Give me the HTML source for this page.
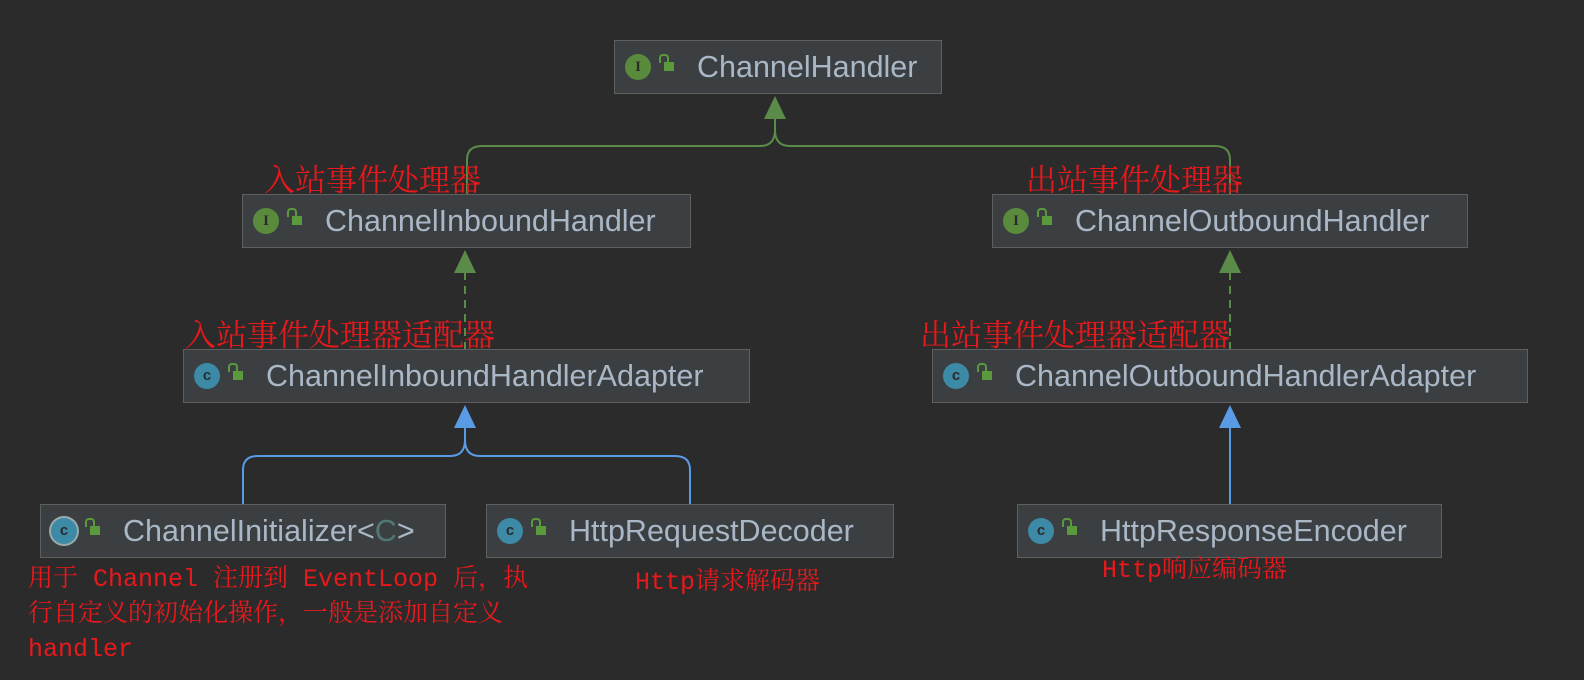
<!DOCTYPE html>
<html><head><meta charset="utf-8"><style>
body{margin:0;width:1584px;height:680px;background:#2b2b2b;position:relative;overflow:hidden;font-family:"Liberation Sans","DejaVu Sans",sans-serif}
.b{position:absolute;height:54px;background:#3c3f41;border:1px solid #5e6060;box-sizing:border-box;color:#a9b7c6;font-size:30.5px;line-height:52px;white-space:nowrap}
.ic{position:absolute;top:13px;width:26px;height:26px;border-radius:50%;color:#2b2b2b;font:bold 15px/26px "Liberation Serif",serif;text-align:center}
.i{background:#5a8b3c}.c{background:#3c8aa6;font-family:"Liberation Sans",sans-serif}
.lk{position:absolute;top:21px;width:10px;height:9px;background:#5b9a3c}
.lk:before{content:"";position:absolute;left:-5px;top:-8px;width:6px;height:7px;border:2px solid #5b9a3c;border-bottom:none;border-radius:4px 4px 0 0}
.t{position:absolute}
.r{position:absolute;color:#e8191c;font-family:"Liberation Serif","Noto Serif CJK SC",serif;font-size:31px;white-space:nowrap}
.s{position:absolute;color:#e8191c;font-family:"Liberation Mono","Noto Serif CJK SC",monospace;font-size:25px;line-height:35px;white-space:nowrap}
</style></head><body>
<svg width="1584" height="680" style="position:absolute;left:0;top:0">
<g fill="none" stroke="#5a8b48" stroke-width="2">
<path d="M775 116 V130 Q775 146 760 146 H482 Q467 146 467 160 V194"/>
<path d="M775 130 Q775 146 790 146 H1215 Q1230 146 1230 160 V194"/>
<path d="M465 272 V349 M1230 272 V349" stroke-dasharray="8 6"/>
</g>
<g fill="#5a8b48"><path d="M775 96 L764 119 H786Z"/><path d="M465 250 L454 273 H476Z"/><path d="M1230 250 L1219 273 H1241Z"/></g>
<g fill="none" stroke="#5a9be6" stroke-width="2">
<path d="M465 426 V440 Q465 456 450 456 H258 Q243 456 243 470 V504"/>
<path d="M465 440 Q465 456 480 456 H675 Q690 456 690 470 V504"/>
<path d="M1230 426 V504"/>
</g>
<g fill="#5a9be6"><path d="M465 405 L454 428 H476Z"/><path d="M1230 405 L1219 428 H1241Z"/></g>
</svg>

<div class="b" style="left:614px;top:40px;width:328px"><div class="ic i" style="left:10px">I</div><div class="lk" style="left:49px"></div><span class="t" style="left:82px">ChannelHandler</span></div>
<div class="b" style="left:242px;top:194px;width:449px"><div class="ic i" style="left:10px">I</div><div class="lk" style="left:49px"></div><span class="t" style="left:82px">ChannelInboundHandler</span></div>
<div class="b" style="left:992px;top:194px;width:476px"><div class="ic i" style="left:10px">I</div><div class="lk" style="left:49px"></div><span class="t" style="left:82px">ChannelOutboundHandler</span></div>
<div class="b" style="left:183px;top:349px;width:567px"><div class="ic c" style="left:10px">c</div><div class="lk" style="left:49px"></div><span class="t" style="left:82px">ChannelInboundHandlerAdapter</span></div>
<div class="b" style="left:932px;top:349px;width:596px"><div class="ic c" style="left:10px">c</div><div class="lk" style="left:49px"></div><span class="t" style="left:82px">ChannelOutboundHandlerAdapter</span></div>
<div class="b" style="left:40px;top:504px;width:406px"><div class="ic c" style="left:10px;box-shadow:0 0 0 2px #9aa">c</div><div class="lk" style="left:49px"></div><span class="t" style="left:82px">ChannelInitializer&lt;<span style="color:#507874">C</span>&gt;</span></div>
<div class="b" style="left:486px;top:504px;width:408px"><div class="ic c" style="left:10px">c</div><div class="lk" style="left:49px"></div><span class="t" style="left:82px">HttpRequestDecoder</span></div>
<div class="b" style="left:1017px;top:504px;width:425px"><div class="ic c" style="left:10px">c</div><div class="lk" style="left:49px"></div><span class="t" style="left:82px">HttpResponseEncoder</span></div>

<div class="r" style="left:264px;top:155px">入站事件处理器</div>
<div class="r" style="left:1026px;top:155px">出站事件处理器</div>
<div class="r" style="left:185px;top:310px">入站事件处理器适配器</div>
<div class="r" style="left:920px;top:310px">出站事件处理器适配器</div>
<div class="s" style="left:28px;top:562px">用于 Channel 注册到 EventLoop 后，执<br>行自定义的初始化操作，一般是添加自定义<br>handler</div>
<div class="s" style="left:635px;top:565px">Http请求解码器</div>
<div class="s" style="left:1102px;top:553px">Http响应编码器</div>
</body></html>
